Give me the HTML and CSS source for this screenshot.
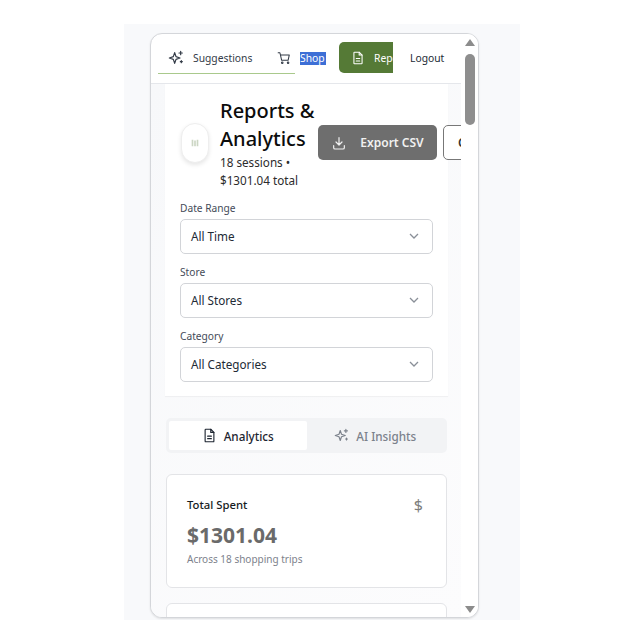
FILE: index.html
```html
<!DOCTYPE html>
<html lang="en">
<head>
  <meta charset="UTF-8">
  <title>Reports &amp; Analytics</title>
  <link rel="stylesheet" href="styles.css">
</head>
<body>
  <div class="stage">
    <div class="phone">
      <div class="viewport">
        <!-- Top nav -->
        <nav class="nav">
          <div class="nav-underlined">
            <svg class="icon spark" viewBox="0 0 24 24"><path d="M10 4l2 6 6 2-6 2-2 6-2-6-6-2 6-2z"/><path d="M19 2v5M16.500 4.500h5M20 16v3M18.500 17.500h3"/></svg>
            <span class="nav-label">Suggestions</span>
            <svg class="icon cart" viewBox="0 0 24 24"><circle cx="9" cy="20" r="1.300"/><circle cx="19" cy="20" r="1.300"/><path d="M2 3h3l3 13h11l2-9H6"/></svg>
          </div>
          <span class="nav-shop">Shop</span>
          <div class="nav-active">
            <svg class="icon doc" viewBox="0 0 24 24"><path d="M14 2H6a1 1 0 0 0-1 1v18a1 1 0 0 0 1 1h12a1 1 0 0 0 1-1V7z"/><path d="M14 2v5h5M9 13h6M9 17h6"/></svg>
            <span>Reports</span>
          </div>
          <span class="nav-logout">Logout</span>
        </nav>

        <main class="main">
          <!-- Header + filters -->
          <section class="head-card">
            <div class="head-row">
              <div class="bubble">
                <svg class="bubble-icon" viewBox="0 0 12 12"><path d="M2 2h2v8H2zM5 3h2v7H5zM8 2h2v8H8z"/></svg>
              </div>
              <div class="head-text">
                <h1>Reports &amp; Analytics</h1>
                <p>18 sessions • $1301.04 total</p>
              </div>
              <div class="head-actions">
                <button class="btn-export">
                  <svg class="icon dl" viewBox="0 0 24 24"><path d="M12 4v11M7.500 10.500L12 15l4.500-4.500M4 16v3a2 2 0 0 0 2 2h12a2 2 0 0 0 2-2v-3"/></svg>
                  Export CSV
                </button>
                <button class="btn-outline">Clear</button>
              </div>
            </div>

            <label class="field-label">Date Range</label>
            <div class="select"><span>All Time</span><svg class="chev" viewBox="0 0 12 12"><path d="M2 4l4 4 4-4"/></svg></div>
            <label class="field-label">Store</label>
            <div class="select"><span>All Stores</span><svg class="chev" viewBox="0 0 12 12"><path d="M2 4l4 4 4-4"/></svg></div>
            <label class="field-label">Category</label>
            <div class="select"><span>All Categories</span><svg class="chev" viewBox="0 0 12 12"><path d="M2 4l4 4 4-4"/></svg></div>
          </section>

          <!-- Tabs -->
          <div class="tabs">
            <div class="tab tab-on">
              <svg class="icon" viewBox="0 0 24 24"><path d="M14 2H6a1 1 0 0 0-1 1v18a1 1 0 0 0 1 1h12a1 1 0 0 0 1-1V7z"/><path d="M14 2v5h5M9 13h6M9 17h6"/></svg>
              Analytics
            </div>
            <div class="tab">
              <svg class="icon" viewBox="0 0 24 24"><path d="M10 4l2 6 6 2-6 2-2 6-2-6-6-2 6-2z"/><path d="M19 2v5M16.500 4.500h5M20 16v3M18.500 17.500h3"/></svg>
              AI Insights
            </div>
          </div>

          <!-- Stat cards -->
          <section class="stat">
            <div class="stat-top"><span>Total Spent</span><span class="stat-sign">$</span></div>
            <div class="stat-value">$1301.04</div>
            <div class="stat-note">Across 18 shopping trips</div>
          </section>
          <section class="stat"></section>
        </main>
      </div>

      <!-- Scrollbar -->
      <div class="scrollbar">
        <div class="arrow arrow-up"></div>
        <div class="thumb"></div>
        <div class="arrow arrow-down"></div>
      </div>
    </div>
  </div>
</body>
</html>
```

FILE: styles.css
```css
body {
  margin: 0;
  background: #fff;
  font-family: "Noto Sans", "Open Sans", sans-serif;
  color: #111;
}
.stage {
  width: 396px;
  height: 596px;
  margin: 24px 0 0 124px;
  padding: 9px 0 0 26px;
  box-sizing: border-box;
  background: #f8f9fb;
}
.phone {
  width: 329px;
  height: 585px;
  box-sizing: border-box;
  display: flex;
  background: #fff;
  border: 1px solid #d4d6da;
  border-radius: 12px;
  overflow: hidden;
  box-shadow: 0 1px 2px rgba(0, 0, 0, 0.1);
}
.viewport {
  width: 310px;
  overflow: hidden;
  flex: none;
}
.icon {
  width: 16px;
  height: 16px;
  flex: none;
  fill: none;
  stroke: currentColor;
  stroke-width: 1.8;
  stroke-linecap: round;
  stroke-linejoin: round;
}

/* nav */
.nav {
  height: 50px;
  display: flex;
  align-items: flex-start;
  box-sizing: border-box;
  border-bottom: 1px solid #e5e7eb;
  font-size: 10.300px;
  color: #333b47;
  white-space: nowrap;
}
.nav-underlined {
  width: 137px;
  height: 40px;
  margin-left: 7px;
  flex: none;
  display: flex;
  align-items: center;
  box-sizing: border-box;
  padding: 8px 0 0 10px;
  border-bottom: 1px solid #a9c98c;
}
.nav-label {
  margin-left: 9px;
}
.cart {
  margin-left: 25px;
  width: 14px;
  height: 14px;
}
.nav-shop {
  margin: 18px 0 0 5px;
  width: 26px;
  flex: none;
  background: #3d6fd6;
  color: #fff;
  line-height: 13px;
  overflow: hidden;
}
.nav-active {
  width: 54px;
  height: 31px;
  margin: 8px 0 0 13px;
  flex: none;
  display: flex;
  align-items: center;
  gap: 9px;
  padding-left: 12px;
  box-sizing: border-box;
  background: #557a36;
  color: #fff;
  border-radius: 5px 0 0 5px;
  overflow: hidden;
}
.nav-active .icon {
  width: 14px;
  height: 14px;
}
.nav-logout {
  margin: 17px 0 0 17px;
  color: #222a35;
}

/* main column */
.main {
  height: 534px;
  padding: 0 14px;
  background: linear-gradient(135deg, #f7f8fa, #fcfcfd);
  overflow: hidden;
}
.head-card {
  width: 283px;
  height: 312px;
  box-sizing: border-box;
  padding: 14px 15px 0;
  background: #fff;
  box-shadow: 0 1px 1px rgba(0, 0, 0, 0.04);
  margin-bottom: 22px;
}
.head-row {
  display: flex;
  align-items: center;
  height: 89px;
  margin-bottom: 15px;
}
.bubble {
  width: 28px;
  height: 40px;
  flex: none;
  display: flex;
  align-items: center;
  justify-content: center;
  border: 1px solid #eeeeee;
  border-radius: 14px;
  background: #fff;
  box-shadow: 0 2px 4px rgba(0, 0, 0, 0.1);
  margin-left: 1px;
  box-sizing: border-box;
}
.bubble-icon {
  width: 10px;
  height: 10px;
  fill: #ccd6c4;
}
.head-text {
  width: 98px;
  margin-left: 11px;
  flex: none;
}
.head-text h1 {
  margin: 0;
  font-size: 20px;
  font-weight: 500;
  line-height: 28px;
  color: #0c0c0c;
}
.head-text p {
  margin: 0;
  font-size: 11.700px;
  line-height: 18px;
  color: #2c2c2c;
}
.head-actions {
  display: flex;
  gap: 6px;
  flex: none;
  align-self: flex-start;
  margin: 27px 0 0 0;
}
.btn-export {
  width: 119px;
  height: 35px;
  display: flex;
  align-items: center;
  justify-content: center;
  gap: 13px;
  border: none;
  border-radius: 5px;
  background: #6e6e6e;
  color: #f1f1f1;
  font: 600 12px "Noto Sans", sans-serif;
  flex: none;
}
.btn-outline {
  width: 80px;
  height: 35px;
  border: 1px solid #777;
  border-radius: 5px;
  background: #fff;
  font: 600 12px "Noto Sans", sans-serif;
  color: #333;
  flex: none;
  text-align: left;
  padding-left: 14px;
}
.field-label {
  display: block;
  font-size: 10.200px;
  line-height: 13px;
  color: #444b58;
  margin-bottom: 4px;
}
.select {
  width: 253px;
  height: 35px;
  margin-bottom: 12px;
  box-sizing: border-box;
  display: flex;
  align-items: center;
  justify-content: space-between;
  padding: 0 12px 1px 10px;
  border: 1px solid #d2d4d8;
  border-radius: 5px;
  font-size: 11.700px;
  color: #222a35;
  background: #fff;
}
.chev {
  width: 12px;
  height: 12px;
  fill: none;
  stroke: #8a8f98;
  stroke-width: 1.3;
}

/* tabs */
.tabs {
  width: 281px;
  height: 35px;
  margin: 0 0 21px 1px;
  padding: 3px;
  box-sizing: border-box;
  display: flex;
  background: #f2f3f5;
  border-radius: 5px;
}
.tab {
  flex: 1;
  display: flex;
  align-items: center;
  justify-content: center;
  gap: 7px;
  font-size: 11.700px;
  font-weight: 500;
  color: #7b818b;
}
.tab .icon {
  width: 15px;
  height: 15px;
}
.tab-on {
  background: #fff;
  color: #1d2530;
  border-radius: 2px;
}

/* stat cards */
.stat {
  width: 281px;
  height: 114px;
  margin: 0 0 15px 1px;
  padding: 22px 23px 0 20px;
  box-sizing: border-box;
  background: #fff;
  border: 1px solid #e3e4e7;
  border-radius: 6px;
}
.stat-top {
  display: flex;
  justify-content: space-between;
  align-items: center;
  font-size: 11.300px;
  font-weight: 500;
  line-height: 16px;
  color: #161b22;
}
.stat-sign {
  font-size: 16px;
  font-weight: 400;
  color: #7d7d7d;
}
.stat-value {
  margin-top: 8px;
  font-size: 21px;
  font-weight: 700;
  line-height: 28px;
  color: #6a6a6a;
}
.stat-note {
  margin-top: 3px;
  font-size: 10px;
  line-height: 14px;
  color: #7d828c;
}

/* scrollbar */
.scrollbar {
  flex: 1;
  display: flex;
  flex-direction: column;
  align-items: center;
  background: #fff;
}
.arrow {
  width: 0;
  height: 0;
  border-left: 5px solid transparent;
  border-right: 5px solid transparent;
}
.arrow-up {
  border-bottom: 7px solid #8c8c8c;
  margin-top: 5px;
}
.thumb {
  width: 10px;
  height: 71px;
  margin-top: 8px;
  border-radius: 5px;
  background: #8e8e8e;
}
.arrow-down {
  border-top: 7px solid #8c8c8c;
  margin-top: auto;
  margin-bottom: 4px;
}
```
